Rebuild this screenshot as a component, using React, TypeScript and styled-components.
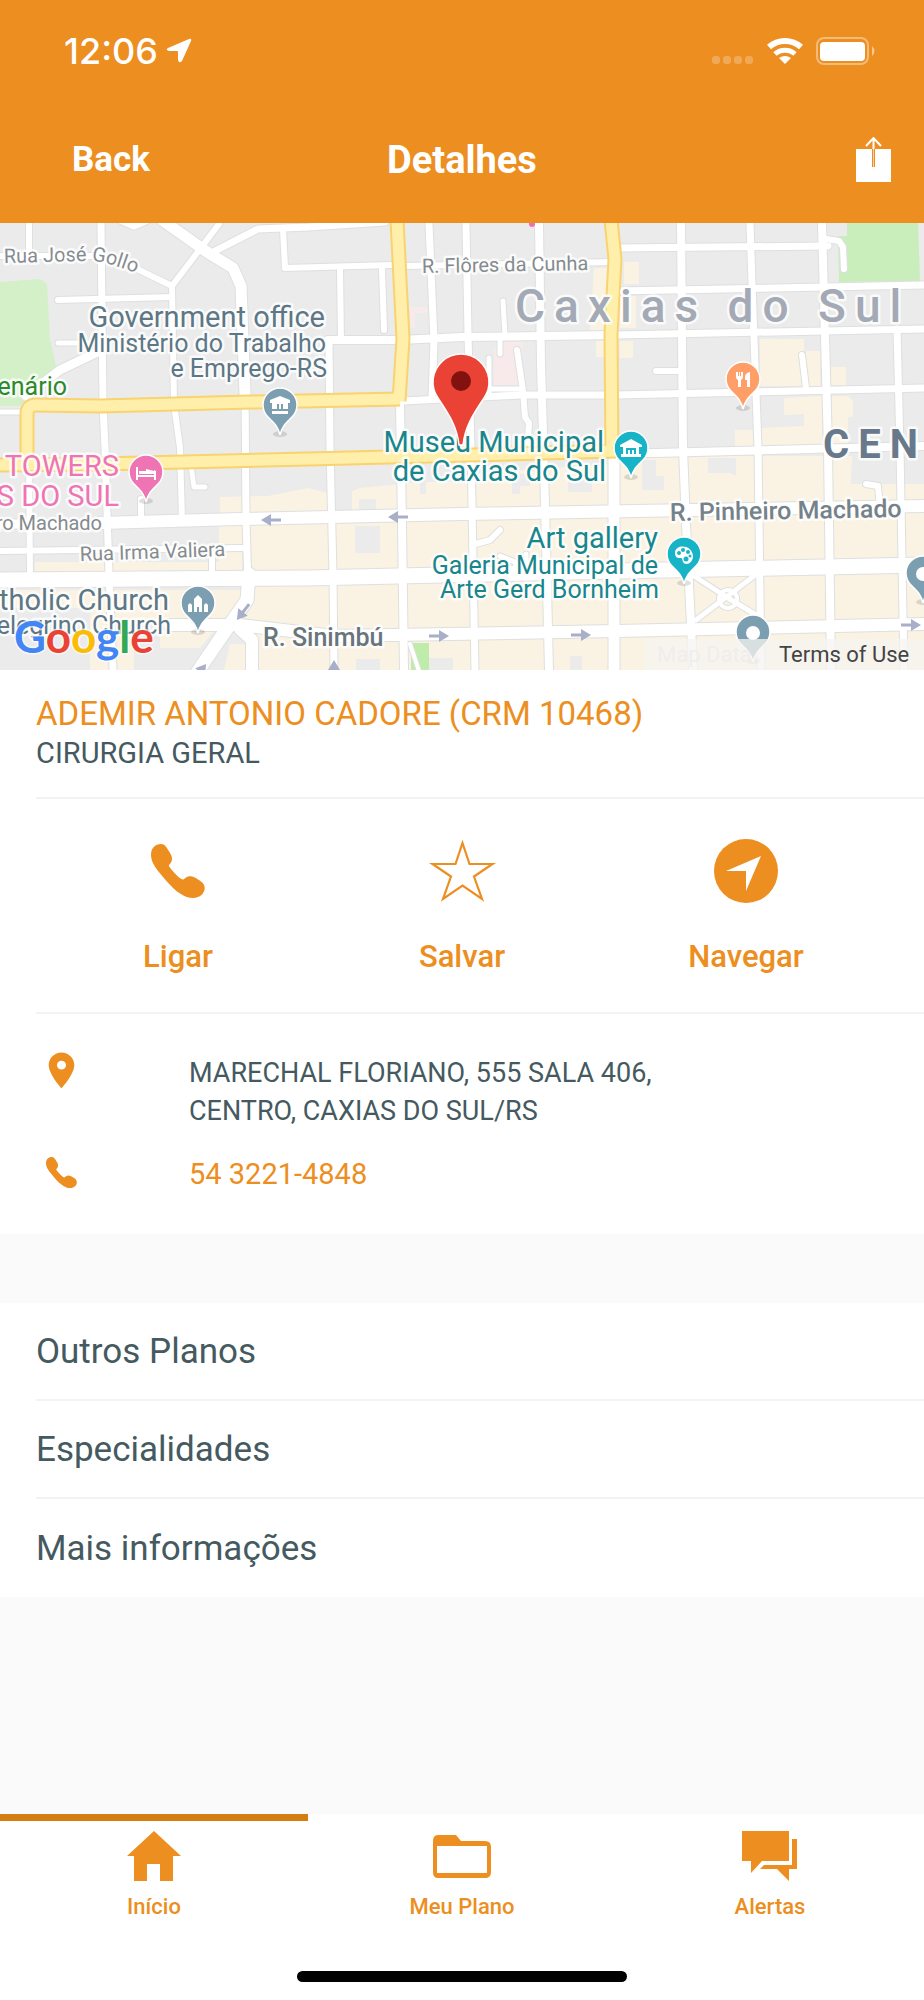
import React from "react";
import styled, { createGlobalStyle } from "styled-components";
import { IoMdPin } from "react-icons/io";

const orange = "#ec8e20";
const orangeDark = "#d47e12";
const slate = "#455a60";
const hairline = "#f2f3f4";

const GlobalStyle = createGlobalStyle`
  *, *::before, *::after { box-sizing: border-box; }
  body {
    margin: 0;
    background: #fafafa;
    color: ${slate};
    font-family: Roboto, "Liberation Sans", sans-serif;
  }
  h1, h2, p, ul { margin: 0; padding: 0; font-weight: 400; }
  button { border: 0; padding: 0; background: none; color: inherit; font: inherit; cursor: pointer; }
  a { color: inherit; text-decoration: none; }
  svg { flex-shrink: 0; }
`;

const Screen = styled.div`
  display: flex;
  flex-direction: column;
  min-height: 100vh;
`;

const Header = styled.header`
  background: ${orange};
  color: #fff;
`;

const StatusBar = styled.div`
  display: flex;
  align-items: center;
  justify-content: space-between;
  height: 96px;
  padding: 6px 48px 0 64px;
`;

const Clock = styled.div`
  display: flex;
  align-items: center;
  gap: 8px;
  font: 500 36px/40px Inter, "Liberation Sans", sans-serif;
`;

const Signals = styled.div`
  display: flex;
  align-items: center;
  gap: 12px;
`;

const NavBar = styled.div`
  display: grid;
  grid-template-columns: 1fr auto 1fr;
  align-items: center;
  height: 127px;
`;

const BackButton = styled.button`
  justify-self: start;
  margin-left: 72px;
  font-size: 35px;
  font-weight: 700;
  line-height: 40px;
`;

const Title = styled.h1`
  font-size: 38px;
  font-weight: 700;
  line-height: 40px;
`;

const ShareButton = styled.button`
  justify-self: end;
  display: flex;
  margin-right: 32px;
`;

const MapFrame = styled.section`
  height: 447px;
  overflow: hidden;
`;

const MapDrawing = styled.svg`
  display: block;
  width: 100%;
  height: 100%;
  font-family: Roboto, "Liberation Sans", sans-serif;
`;

const MapLabel = styled.text<{ $size: number; $color: string; $weight?: number; $track?: number }>`
  font-size: ${(p) => p.$size}px;
  font-weight: ${(p) => p.$weight ?? 400};
  fill: ${(p) => p.$color};
  letter-spacing: ${(p) => p.$track ?? 0}px;
  stroke: rgba(255, 255, 255, 0.8);
  stroke-width: 5px;
  stroke-linejoin: round;
  paint-order: stroke;
`;

const Wordmark = styled.text`
  font: 700 44px Lato, sans-serif;
  stroke: rgba(255, 255, 255, 0.7);
  stroke-width: 3px;
  paint-order: stroke;
`;

const Card = styled.section`
  background: #fff;
  padding-left: 36px;
`;

const Identity = styled.div`
  padding: 24px 36px 25px 0;
  border-bottom: 2px solid ${hairline};
`;

const DoctorName = styled.h2`
  font-size: 33px;
  line-height: 40px;
  color: ${orange};
`;

const Specialty = styled.p`
  font-size: 29px;
  line-height: 38px;
`;

const Actions = styled.div`
  display: grid;
  grid-template-columns: repeat(3, 1fr);
  padding: 40px 36px 37px 0;
  border-bottom: 2px solid ${hairline};
`;

const ActionButton = styled.button`
  display: flex;
  flex-direction: column;
  align-items: center;
  gap: 36px;
  color: ${orange};
  font-size: 31px;
  font-weight: 500;
  line-height: 36px;
`;

const IconBox = styled.span<{ $size: number }>`
  display: flex;
  align-items: center;
  justify-content: center;
  width: ${(p) => p.$size}px;
  height: ${(p) => p.$size}px;
  color: ${orange};
`;

const Contact = styled.div`
  display: grid;
  grid-template-columns: 48px 1fr;
  column-gap: 105px;
  row-gap: 22px;
  padding: 36px 36px 38px 0;
`;

const ContactIcon = styled.div`
  display: flex;
  justify-content: center;
  align-items: flex-start;
  width: 50px;
  color: ${orange};
`;

const Address = styled.p`
  padding-top: 4px;
  font-size: 27px;
  line-height: 38px;
`;

const PhoneLink = styled.a`
  font-size: 29px;
  line-height: 44px;
  color: ${orange};
`;

const Menu = styled.ul`
  margin-top: 69px;
  padding-left: 36px;
  background: #fff;
  list-style: none;
`;

const MenuItem = styled.li`
  height: 98px;
  &:not(:last-child) { border-bottom: 2px solid ${hairline}; }
`;

const MenuButton = styled.button`
  display: block;
  width: 100%;
  height: 100%;
  padding-top: 2px;
  text-align: left;
  font-size: 35px;
  line-height: 40px;
`;

const TabBar = styled.nav`
  margin-top: auto;
  padding-bottom: 18px;
  background: #fff;
`;

const Tabs = styled.div`
  display: grid;
  grid-template-columns: repeat(3, 1fr);
`;

const Tab = styled.a<{ $active?: boolean }>`
  display: flex;
  flex-direction: column;
  align-items: center;
  gap: 8px;
  height: 157px;
  padding-top: 8px;
  border-top: 7px solid ${(p) => (p.$active ? orangeDark : "transparent")};
  color: ${orange};
  font-size: 22px;
  font-weight: 500;
  line-height: 32px;
`;

const HomeIndicator = styled.div`
  width: 330px;
  height: 11px;
  margin: 0 auto;
  border-radius: 6px;
  background: #000;
`;

type Road = [string, number];

const roads: Road[] = [
  ["M29 0V32", 6],
  ["M101 0L103 180L105 224L109 350L113 446", 7],
  ["M172 62L174 180L180 224L182 296", 6],
  ["M0 32L100 32L135 44L172 62", 6],
  ["M172 62L219 0", 6],
  ["M120 -4L134 2L152 -6", 7],
  ["M215 27L258 5L308 3L385 -2", 7],
  ["M283 5L285 44L392 41", 6],
  ["M162 -4L207 28L233 44L241 62L245 170", 11],
  ["M245 160L246 296L248 362", 7],
  ["M58 76L172 73", 6],
  ["M58 119L104 119", 5],
  ["M104 125L60 146L26 172", 9],
  ["M0 188L22 188", 5],
  ["M29 230L30 350", 6],
  ["M191 242L194 263L205 263", 5],
  ["M141 275V298", 6],
  ["M100 299L240 295L462 290L924 282", 12],
  ["M0 300H100", 9],
  ["M0 327L242 324", 6],
  ["M212 325V350", 6],
  ["M0 356L308 354L616 347L924 341", 15],
  ["M170 401L240 401L334 412L616 407L924 400", 12],
  ["M249 350L247 376L226 406L196 450", 13],
  ["M240 405L252 416L252 446", 12],
  ["M340 44L341 116", 6],
  ["M382 44L384 106", 6],
  ["M328 116L400 116L462 113L616 111", 8],
  ["M329 116L330 224L333 350L334 446", 7],
  ["M400 178L402 300L404 446", 8],
  ["M404 42L616 38", 6],
  ["M429 0L434 117L432 173", 7],
  ["M466 0L468 110L471 224L475 446", 7],
  ["M539 0L541 140L545 280L549 446", 8],
  ["M404 177L520 171L616 171", 7],
  ["M480 165H522", 5],
  ["M503 77L505 112", 5],
  ["M500 112V130", 5],
  ["M489 134V172", 5],
  ["M517 126L523 167L525 193L529 199L527 228", 6],
  ["M614 236V446", 11],
  ["M618 24L828 22", 7],
  ["M618 67L924 61", 7],
  ["M616 111L924 105", 7],
  ["M616 171L924 164", 7],
  ["M616 230L924 222", 8],
  ["M681 0L683 224L686 300L691 400L693 446", 8],
  ["M750 0L752 60L758 224L761 446", 7],
  ["M822 0L828 224L831 446", 8],
  ["M897 105L900 224L904 446", 7],
  ["M826 15L839 17L843 23L844 45", 6],
  ["M656 147H680", 6],
  ["M802 131L806 164", 6],
  ["M866 260L878 262L880 284", 6],
  ["M472 321L490 316L500 306", 6],
  ["M526 330L526 350M500 332L515 338L518 350", 5],
  ["M694 352L728 374L758 392", 5],
  ["M754 352L696 396", 5],
  ["M728 366a9 9 0 1 0 .1 0", 4],
  ["M410 420L420 450", 4],
];

const highways = [
  "M27 242L27 190Q27 181 36 181L100 182L250 178L400 175",
  "M0 241L100 240L308 235L470 231L616 227",
  "M397 -4L403 115L399 177",
  "M611 -4L615 35L611 110L612 232",
];

const beigeBlocks = [
  "M268 272L308 264L340 272L360 264L420 258L462 250L616 240V446H226V446H250V292H220V273Z",
  "M616 232H924V446H616Z",
  "M35 338H242V350H35Z",
  "M219 301H242V350H219Z",
  "M0 366H250V400H90V384H0Z",
  "M90 400H134V446H90Z",
  "M160 406H215L200 424H160Z",
  "M230 420H250V446H224Z",
  "M760 115H804V162H760Z",
  "M806 127H820V162H806Z",
  "M831 143H846V161H831Z",
  "M784 174L822 172V222H762V204L804 202V190L784 191Z",
  "M832 172H848L853 177V193H848V222H832Z",
  "M735 206H753V222H735Z",
  "M624 38H639V60H624Z",
  "M620 72H636V104H620Z",
  "M620 117H633V134H620Z",
  "M594 44H610V106H590Z",
  "M596 117H608V133H596Z",
];

const greyBlocks = [
  "M334 262H352V286H334ZM359 275H376V286H359Z",
  "M355 302H380V329H355Z",
  "M409 243H462V258H426V270H420V258H409Z",
  "M512 250H530V262H520V270H512ZM568 256H592V268H568Z",
  "M642 236H656V252H664V266H642Z",
  "M708 234H736V252L730 249H708Z",
  "M852 232H896V260H851ZM904 228H924V260H904Z",
  "M356 435H380V446H356ZM428 434H453V446H428ZM570 432H582V446H570Z",
];

function Pin({ x, y, color, children }: { x: number; y: number; color: string; children?: React.ReactNode }) {
  return (
    <g transform={`translate(${x} ${y})`}>
      <ellipse cy="28" rx="7" ry="3" fill="#000" opacity="0.12" />
      <path
        d="M0 29C-2 20 -6 17 -12 11A17 17 0 1 1 12 11C6 17 2 20 0 29Z"
        fill={color}
        stroke="#fff"
        strokeWidth="1.5"
      />
      {children}
    </g>
  );
}

function OneWay({ x, y, angle }: { x: number; y: number; angle: number }) {
  return (
    <path
      d="M10 0L0 -6V-1.500H-10V1.500H0V6Z"
      fill="#a9aec9"
      transform={`translate(${x} ${y}) rotate(${angle})`}
    />
  );
}

function Handset({ size }: { size: number }) {
  return (
    <svg width={size} height={size} viewBox="0 0 161 161" fill="currentColor" aria-hidden="true">
      <path d="M0 33C0 12 12 0 30 0C42 0 46 10 54 22C62 34 64 40 62 50C60 58 53 60 53 65C56 72 84 104 94 106C99 106 104 97 114 96C128 96 134 101 144 108C156 116 160 122 160 132C160 146 146 161 126 161C100 161 74 142 46 110C16 76 0 56 0 33Z" />
    </svg>
  );
}

function CityMap() {
  const steel = "#5c7785";
  const teal = "#17868d";
  const street = "#858b8f";
  return (
    <MapDrawing viewBox="0 -1 924 447" preserveAspectRatio="xMidYMid slice" role="img" aria-label="Mapa">
      <rect y="-1" width="924" height="447" fill="#ebebeb" />
      <path d="M0 58L40 55L47 60L50 115L56 142L20 182H0Z" fill="#d4f0c8" />
      <path d="M847 -1H918L920 57L839 58L838 12H847Z" fill="#c9eebb" />
      <path d="M494 126L504 118H523L520 161H494ZM410 83H427V89H415V104H410Z" fill="#f8eaea" />
      {beigeBlocks.map((d) => <path key={d} d={d} fill="#faf3e3" />)}
      {greyBlocks.map((d) => <path key={d} d={d} fill="#ebebeb" />)}
      <path d="M411 419H429V446H411Z" fill="#bfecab" />
      <g fill="none" strokeLinejoin="round" strokeLinecap="round">
        {roads.map(([d, w]) => <path key={d} d={d} stroke="#dedfdf" strokeWidth={w + 2} />)}
        {roads.map(([d, w]) => <path key={d} d={d} stroke="#fff" strokeWidth={w} />)}
        {highways.map((d) => <path key={d} d={d} stroke="#f8d36f" strokeWidth="15" strokeLinecap="butt" />)}
        {highways.map((d) => <path key={d} d={d} stroke="#ffefab" strokeWidth="11" strokeLinecap="butt" />)}
      </g>
      <OneWay x={271} y={296} angle={180} />
      <OneWay x={398} y={293} angle={180} />
      <OneWay x={439} y={412} angle={0} />
      <OneWay x={581} y={411} angle={0} />
      <OneWay x={911} y={401} angle={0} />
      <OneWay x={243} y={388} angle={128} />
      <OneWay x={200} y={448} angle={-52} />
      <OneWay x={334} y={446} angle={-90} />
      <circle cx="532" cy="0" r="3" fill="#ef6fb3" />

      <defs>
        <path id="gollo" d="M4 39L88 37Q106 36 150 55" />
      </defs>
      <MapLabel $size={20} $color={street}><textPath href="#gollo">Rua José Gollo</textPath></MapLabel>
      <MapLabel $size={29} $color={steel} x="325" y="103" textAnchor="end">Government office</MapLabel>
      <MapLabel $size={25} $color={steel} x="326" y="128" textAnchor="end">Ministério do Trabalho</MapLabel>
      <MapLabel $size={25} $color={steel} x="327" y="153" textAnchor="end">e Emprego-RS</MapLabel>
      <MapLabel $size={25} $color="#2c8a2c" x="67" y="171" textAnchor="end">enário</MapLabel>
      <MapLabel $size={29} $color="#ef74b4" x="119" y="252" textAnchor="end">TOWERS</MapLabel>
      <MapLabel $size={29} $color="#ef74b4" x="119" y="282" textAnchor="end">S DO SUL</MapLabel>
      <MapLabel $size={20} $color={street} x="102" y="306" textAnchor="end">ro Machado</MapLabel>
      <MapLabel $size={20} $color={street} transform="translate(80 337) rotate(-2)">Rua Irma Valiera</MapLabel>
      <MapLabel $size={29} $color={steel} x="169" y="386" textAnchor="end">tholic Church</MapLabel>
      <MapLabel $size={25} $color={steel} x="171" y="410" textAnchor="end">elegrino Church</MapLabel>
      <MapLabel $size={25} $color="#68757b" $weight={500} x="263" y="422">R. Sinimbú</MapLabel>
      <MapLabel $size={20} $color={street} transform="translate(422 49) rotate(-1)">R. Flôres da Cunha</MapLabel>
      <MapLabel $size={46} $color="#a3a9b5" $weight={500} $track={9} x="515" y="98">Caxias do Sul</MapLabel>
      <MapLabel $size={40} $color="#68798b" $weight={700} $track={9} x="823" y="234">CEN</MapLabel>
      <MapLabel $size={29} $color={teal} x="604" y="228" textAnchor="end">Museu Municipal</MapLabel>
      <MapLabel $size={29} $color={teal} x="606" y="257" textAnchor="end">de Caxias do Sul</MapLabel>
      <MapLabel $size={29} $color={teal} x="658" y="324" textAnchor="end">Art gallery</MapLabel>
      <MapLabel $size={25} $color={teal} x="658" y="350" textAnchor="end">Galeria Municipal de</MapLabel>
      <MapLabel $size={25} $color={teal} x="659" y="374" textAnchor="end">Arte Gerd Bornheim</MapLabel>
      <MapLabel $size={25} $color="#75828a" $weight={500} transform="translate(670 297) rotate(-1)">R. Pinheiro Machado</MapLabel>

      <Pin x={280} y={182} color="#7b9eb1">
        <path d="M-10 -6L0 -10L10 -6V-3H8V3H3V-2H1V3H-1V-2H-3V3H-8V-3H-10ZM-8 5H8V8H-8Z" fill="#fff" />
      </Pin>
      <Pin x={146} y={249} color="#ef74b4">
        <path d="M-10 -6H-8V2H8V-3L10 -2V7H8V4H-8V7H-10ZM-7 -2H0V-4L8 -2V1H-7Z" fill="#fff" />
      </Pin>
      <Pin x={198} y={380} color="#7b9eb1">
        <path d="M-10 8V1L-8 -1L-6 1V8ZM-4 8V-5L0 -9L4 -5V8H1V3H-1V8ZM6 8V1L8 -1L10 1V8Z" fill="#fff" />
      </Pin>
      <Pin x={631} y={225} color="#17b3c6">
        <path d="M-11 -4L0 -10L11 -4V-2H8V5H10V8H-10V5H-8V-2H-11ZM-5 -1V5H-3V1H-1V5H1V1H3V5H5V-1Z" fill="#fff" fillRule="evenodd" />
      </Pin>
      <Pin x={684} y={331} color="#17b3c6">
        <path d="M-9 -3C-8 -11 8 -11 9 1C9 9 1 11 -1 7C-2 4 -1 3 -4 3C-8 3 -9 1 -9 -3Z" fill="#fff" />
        <g fill="#17b3c6"><circle cx="-5" cy="-2" r="2" /><circle cx="-1" cy="-5" r="2" /><circle cx="4" cy="-3" r="2" /><circle cx="6" cy="1" r="1.500" /><circle cx="2" cy="4" r="2.500" /></g>
      </Pin>
      <Pin x={743} y={156} color="#ff9e67">
        <path d="M-7 -8V-3Q-7 -1 -5 0V7H-2V0Q0 -1 0 -3V-8H-2V-4H-3V-8H-4V-4H-5V-8ZM7 -8Q2 -7 2 -3V0H4V7H7Z" fill="#fff" />
      </Pin>
      <Pin x={753} y={409} color="#7b9eb1"><circle r="7" fill="#fff" /></Pin>
      <Pin x={923} y={350} color="#7b9eb1"><circle r="7" fill="#fff" /></Pin>

      <path
        d="M459 221C457 203 450 192 438 174A28 28 0 1 1 484 174C472 192 465 203 463 221Z"
        fill="#ea4335"
        stroke="#fff"
        strokeWidth="1.500"
      />
      <circle cx="461" cy="157" r="10" fill="#81120f" />

      <Wordmark x="14" y="429">
        <tspan fill="#4285f4">G</tspan>
        <tspan fill="#ea4335">o</tspan>
        <tspan fill="#fbbc05">o</tspan>
        <tspan fill="#4285f4">g</tspan>
        <tspan fill="#34a853">l</tspan>
        <tspan fill="#ea4335">e</tspan>
      </Wordmark>
      <rect x="645" y="415" width="279" height="31" fill="#f5f4f1" opacity="0.75" />
      <text x="657" y="438" fontSize="22" fill="#efeeec">Map Data</text>
      <a href="#termos"><text x="779" y="438" fontSize="22" fill="#444">Terms of Use</text></a>
    </MapDrawing>
  );
}

const menuItems = ["Outros Planos", "Especialidades", "Mais informações"];

export default function App() {
  return (
    <Screen>
      <GlobalStyle />
      <Header>
        <StatusBar>
          <Clock>
            12:06
            <svg width="26" height="26" viewBox="0 0 26 26" fill="#fff" aria-hidden="true">
              <path d="M2 10L23 1Q26 0 25 3L16 23Q13 26 12 22V14Q12 13 11 13L3 13Q-1 12 2 10Z" />
            </svg>
          </Clock>
          <Signals>
            <svg width="42" height="28" viewBox="0 0 42 28" fill="#fff" opacity="0.24" aria-hidden="true">
              <rect x="0" y="19" width="8" height="8" rx="3" />
              <rect x="11" y="19" width="8" height="8" rx="3" />
              <rect x="22" y="19" width="8" height="8" rx="3" />
              <rect x="33" y="19" width="8" height="8" rx="3" />
            </svg>
            <svg width="38" height="28" viewBox="0 0 38 28" fill="none" aria-hidden="true">
              <path d="M3 10A24 24 0 0 1 35 10" stroke="#fff" strokeWidth="6" />
              <path d="M9 17A15 15 0 0 1 29 17" stroke="#fff" strokeWidth="5" />
              <path d="M19 27L13 21Q19 17 25 21Z" fill="#fff" />
            </svg>
            <svg width="60" height="28" viewBox="0 0 60 28" fill="none" aria-hidden="true">
              <rect x="1" y="1" width="51" height="26" rx="7" stroke="#fff" strokeOpacity="0.4" strokeWidth="2" />
              <rect x="4" y="5" width="45" height="19" rx="4" fill="#fff" />
              <path d="M56 9Q61 14 56 19Z" fill="#fff" opacity="0.5" />
            </svg>
          </Signals>
        </StatusBar>
        <NavBar>
          <BackButton type="button">Back</BackButton>
          <Title>Detalhes</Title>
          <ShareButton type="button" aria-label="Compartilhar">
            <svg width="36" height="46" viewBox="0 0 36 46" fill="none">
              <path d="M0 12H35V45H0Z" fill="#fff" />
              <path d="M17.500 12V30" stroke={orange} strokeWidth="3" />
              <path d="M17.500 12V30" stroke="#fff" strokeOpacity="0.6" strokeWidth="1" />
              <path d="M17.500 1V12M10 9L17.500 1L25 9" stroke="#fff" strokeWidth="2" />
            </svg>
          </ShareButton>
        </NavBar>
      </Header>

      <MapFrame><CityMap /></MapFrame>

      <Card>
        <Identity>
          <DoctorName>ADEMIR ANTONIO CADORE (CRM 10468)</DoctorName>
          <Specialty>CIRURGIA GERAL</Specialty>
        </Identity>
        <Actions>
          <ActionButton type="button">
            <IconBox $size={64}><Handset size={54} /></IconBox>
            Ligar
          </ActionButton>
          <ActionButton type="button">
            <IconBox $size={64}>
              <svg width="67" height="64" viewBox="0 0 67 64" fill="none" stroke="currentColor" strokeWidth="2.2" aria-hidden="true">
                <path d="M33.500 4L40.500 25H63.500L45 37.500L53 60L33.500 46.500L14 60L22 37.500L3.500 25H26.500Z" />
              </svg>
            </IconBox>
            Salvar
          </ActionButton>
          <ActionButton type="button">
            <IconBox $size={64}>
              <svg width="64" height="64" viewBox="0 0 64 64" aria-hidden="true">
                <circle cx="32" cy="32" r="32" fill="currentColor" />
                <path d="M47 17L32 52V32H12Z" fill="#fff" />
              </svg>
            </IconBox>
            Navegar
          </ActionButton>
        </Actions>
        <Contact>
          <ContactIcon><IoMdPin size={41} /></ContactIcon>
          <Address>MARECHAL FLORIANO, 555 SALA 406,<br />CENTRO, CAXIAS DO SUL/RS</Address>
          <ContactIcon><IconBox $size={40}><Handset size={31} /></IconBox></ContactIcon>
          <PhoneLink href="tel:5432214848">54 3221-4848</PhoneLink>
        </Contact>
      </Card>

      <Menu>
        {menuItems.map((item) => (
          <MenuItem key={item}><MenuButton type="button">{item}</MenuButton></MenuItem>
        ))}
      </Menu>

      <TabBar>
        <Tabs>
          <Tab href="#inicio" $active>
            <IconBox $size={54}>
              <svg width="54" height="54" viewBox="0 0 54 54" fill="currentColor" aria-hidden="true">
                <path d="M27 2L54 27H46V52H33V35H20V52H7V27H0Z" />
              </svg>
            </IconBox>
            Início
          </Tab>
          <Tab href="#plano">
            <IconBox $size={54}>
              <svg width="60" height="54" viewBox="0 0 60 54" fill="currentColor" aria-hidden="true">
                <path fillRule="evenodd" d="M6 6H24L29 12H53Q59 12 59 18V43Q59 49 53 49H6Q1 49 1 43V12Q1 6 6 6ZM5 17V44H55V17Z" />
              </svg>
            </IconBox>
            Meu Plano
          </Tab>
          <Tab href="#alertas">
            <IconBox $size={54}>
              <svg width="56" height="54" viewBox="0 0 56 54" fill="currentColor" aria-hidden="true">
                <path d="M0 2H47V32H20L9 44V32H0Z" />
                <path d="M50 10H55V40H47V52L35 40H18L22 36H50Z" />
              </svg>
            </IconBox>
            Alertas
          </Tab>
        </Tabs>
        <HomeIndicator />
      </TabBar>
    </Screen>
  );
}
